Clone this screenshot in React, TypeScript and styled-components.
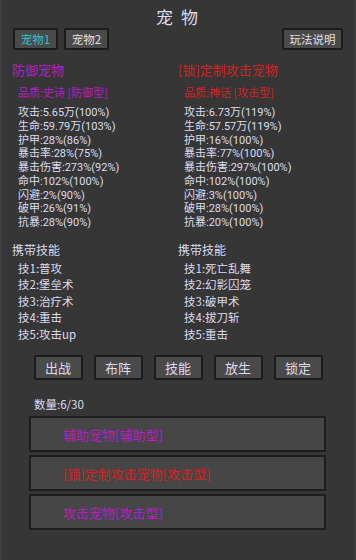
import styled, { createGlobalStyle } from "styled-components";

const GlobalStyle = createGlobalStyle`
    html, body {
        margin: 0;
        padding: 0;
        background: #363636;
    }
    body {
        font-family: "Noto Sans CJK SC", "Noto Sans", sans-serif;
    }
`

interface Pet {
    name: string;
    quality: string;
    color: string;
    stats: string[];
    skills: string[];
}

const pets: Pet[] = [
    {
        name: "防御宠物",
        quality: "品质:史诗 [防御型]",
        color: "#b31fc4",
        stats: [
            "攻击:5.65万(100%)",
            "生命:59.79万(103%)",
            "护甲:28%(86%)",
            "暴击率:28%(75%)",
            "暴击伤害:273%(92%)",
            "命中:102%(100%)",
            "闪避:2%(90%)",
            "破甲:26%(91%)",
            "抗暴:28%(90%)",
        ],
        skills: ["技1:普攻", "技2:堡垒术", "技3:治疗术", "技4:重击", "技5:攻击up"],
    },
    {
        name: "[锁]定制攻击宠物",
        quality: "品质:神话 [攻击型]",
        color: "#d42222",
        stats: [
            "攻击:6.73万(119%)",
            "生命:57.57万(119%)",
            "护甲:16%(100%)",
            "暴击率:77%(100%)",
            "暴击伤害:297%(100%)",
            "命中:102%(100%)",
            "闪避:3%(100%)",
            "破甲:28%(100%)",
            "抗暴:20%(100%)",
        ],
        skills: ["技1:死亡乱舞", "技2:幻影囚笼", "技3:破甲术", "技4:拔刀斩", "技5:重击"],
    },
]

const actions = ["出战", "布阵", "技能", "放生", "锁定"]

const listItems = [
    { label: "辅助宠物[辅助型]", color: "#b31fc4" },
    { label: "[锁]定制攻击宠物[攻击型]", color: "#d42222" },
    { label: "攻击宠物[攻击型]", color: "#b31fc4" },
]

export default function App() {
    return (
        <Screen>
            <GlobalStyle />
            <Title>宠 物</Title>
            <TabBar>
                <TabGroup>
                    <Tab active>宠物1</Tab>
                    <Tab>宠物2</Tab>
                </TabGroup>
                <HelpButton>玩法说明</HelpButton>
            </TabBar>

            <Columns>
                {pets.map((pet) => (
                    <Column key={pet.name}>
                        <PetName color={pet.color}>{pet.name}</PetName>
                        <Quality color={pet.color}>{pet.quality}</Quality>
                        <StatList>
                            {pet.stats.map((s) => (
                                <Stat key={s}>{s}</Stat>
                            ))}
                        </StatList>
                        <SectionTitle>携带技能</SectionTitle>
                        <SkillList>
                            {pet.skills.map((s) => (
                                <Skill key={s}>{s}</Skill>
                            ))}
                        </SkillList>
                    </Column>
                ))}
            </Columns>

            <ActionRow>
                {actions.map((a) => (
                    <ActionButton key={a}>{a}</ActionButton>
                ))}
            </ActionRow>

            <Count>数量:6/30</Count>
            <PetList>
                {listItems.map((item) => (
                    <PetRow key={item.label} color={item.color}>
                        {item.label}
                    </PetRow>
                ))}
            </PetList>
        </Screen>
    )
}

const Screen = styled.div`
    width: 356px;
    height: 560px;
    box-sizing: border-box;
    background: #363636;
    border-left: 2px solid #3e3e3e;
    border-right: 2px solid #3e3e3e;
    color: #dcdcf0;
    overflow: hidden;
`

const Title = styled.div`
    margin-top: 7px;
    text-align: center;
    font-size: 17px;
    line-height: 20px;
    letter-spacing: 2px;
    color: #dcdcec;
`

const TabBar = styled.div`
    display: flex;
    justify-content: space-between;
    margin-top: 1px;
    padding: 0 11px;
`

const TabGroup = styled.div`
    display: flex;
    gap: 6px;
`

const buttonBase = `
    box-sizing: border-box;
    background: #4a4a4a;
    border: 2px solid #1c1c1c;
    border-radius: 2px;
    display: flex;
    align-items: center;
    justify-content: center;
    font-family: "Noto Sans CJK SC", "Noto Sans", sans-serif;
`

const Tab = styled.div<{ active?: boolean }>`
    ${buttonBase}
    width: 45px;
    height: 22px;
    font-size: 11.5px;
    color: ${(props) => props.active ? "#2cc6c6" : "#e0e0ec"};
`

const HelpButton = styled.div`
    ${buttonBase}
    width: 61px;
    height: 22px;
    font-size: 11.5px;
    color: #e0e0ec;
`

const Columns = styled.div`
    display: grid;
    grid-template-columns: 166px 166px;
    padding-left: 10px;
    margin-top: 11px;
`

const Column = styled.div`
    display: flex;
    flex-direction: column;
`

const PetName = styled.div<{ color: string }>`
    font-size: 13px;
    line-height: 18px;
    color: ${(props) => props.color};
`

const Quality = styled.div<{ color: string }>`
    margin-top: 5px;
    padding-left: 6px;
    font-size: 11px;
    line-height: 16px;
    color: ${(props) => props.color};
`

const StatList = styled.div`
    margin-top: 6px;
    padding-left: 6px;
`

const Stat = styled.div`
    font-family: Roboto, "Noto Sans CJK SC", sans-serif;
    font-size: 11px;
    line-height: 13.75px;
    white-space: nowrap;
`

const SectionTitle = styled.div`
    margin-top: 11px;
    font-size: 12px;
    line-height: 18px;
`

const SkillList = styled.div`
    margin-top: 1px;
    padding-left: 6px;
`

const Skill = styled.div`
    font-size: 11.5px;
    line-height: 16.5px;
`

const ActionRow = styled.div`
    display: flex;
    justify-content: center;
    gap: 11px;
    margin-top: 13px;
`

const ActionButton = styled.div`
    ${buttonBase}
    width: 49px;
    height: 25px;
    font-size: 13px;
    color: #dcdcec;
`

const Count = styled.div`
    margin-top: 16px;
    padding-left: 32px;
    font-size: 11.5px;
    line-height: 16px;
`

const PetList = styled.div`
    display: flex;
    flex-direction: column;
    gap: 3px;
    margin: 4px 0 0 27px;
    width: 297px;
`

const PetRow = styled.div<{ color: string }>`
    box-sizing: border-box;
    height: 36px;
    background: #464646;
    border: 2px solid #1e1e1e;
    display: flex;
    align-items: center;
    padding-left: 32px;
    font-size: 13px;
    color: ${(props) => props.color};
`
